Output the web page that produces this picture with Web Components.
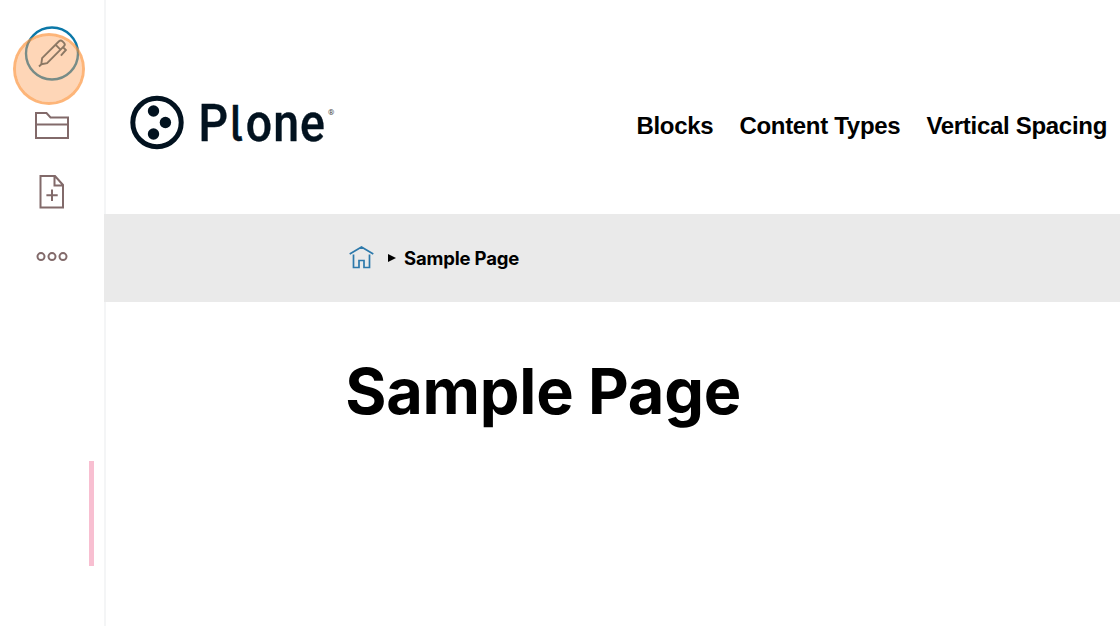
<!DOCTYPE html>
<html lang="en">
<head>
<meta charset="utf-8">
<title>Sample Page</title>
<style>
html, body { margin: 0; height: 100%; overflow: hidden; background: #fff; }
</style>
</head>
<body>
<plone-app></plone-app>
<script>
const define = (name, html) => customElements.define(name, class extends HTMLElement {
  constructor() {
    super();
    this.attachShadow({ mode: 'open' }).innerHTML = html;
  }
});

define('plone-toolbar', `
<style>
:host { display: flex; flex-direction: column; align-items: center; position: relative; box-sizing: border-box; width: 106px; padding: 26px 1px 0; border-right: 2px solid #f4f5f6; }
svg { display: block; fill: none; stroke: #826a6a; stroke-width: 2; }
.edit { width: 56px; height: 56px; }
.folder { width: 34px; height: 28px; margin-top: 29px; }
.add { width: 26px; height: 34px; margin-top: 36px; }
.more { width: 32px; height: 12px; margin-top: 42px; }
.handle { position: absolute; left: 88.500px; top: 461px; width: 5.500px; height: 105px; background: #f8bfd1; }
.click { position: absolute; left: 13px; top: 33px; box-sizing: border-box; width: 72px; height: 72px; border: 3px solid rgba(252,146,58,.68); border-radius: 50%; background: rgba(252,164,96,.45); background-clip: padding-box; }
</style>
<svg class="edit" viewBox="0 0 56 56"><circle cx="28" cy="27.500" r="26" stroke="#0b78a8" stroke-width="2.400"/><path stroke="#2f5468" stroke-width="1.900" d="M15 40.500l2.700-2.500M17.300 38.200l.8-6L35 15.300q1.800-1.700 3.500 0l1.500 1.500q1.700 1.700 0 3.400L23.100 37.200l-5.800 1M31.500 18.700l5.200 5.200M39.300 21.500l2.600 2.500-5 5.700"/></svg>
<svg class="folder" viewBox="0 0 34 28"><path d="M1 27V2h10.500l4 4.500H33V27zM1 13.500h32"/></svg>
<svg class="add" viewBox="0 0 26 34"><path d="M1.500 1h14.500l8 9v22.500H1.500zM15.500 1v9.500h8.500M13 14.500v11.500M7.400 20.200h11.300"/></svg>
<svg class="more" viewBox="0 0 32 12"><circle cx="5" cy="5.600" r="3.500"/><circle cx="16" cy="5.600" r="3.500"/><circle cx="27" cy="5.600" r="3.500"/></svg>
<div class="handle"></div>
<div class="click"></div>`);

define('plone-logo', `
<style>
:host { display: block; width: 210px; height: 60px; }
svg { display: block; fill: #02121f; }
text { font: 500 51.500px Roboto, sans-serif; }
.word { stroke: #02121f; stroke-width: .4; }
.l { font: 500 50px Inter, sans-serif; font-feature-settings: "cv05"; }
.r { font: 8px Roboto, sans-serif; fill: #444; }
</style>
<svg width="210" height="60" viewBox="0 0 210 60">
<circle cx="27" cy="29.500" r="24.200" fill="none" stroke="#02121f" stroke-width="5"/>
<circle cx="23.500" cy="18" r="5.700"/><circle cx="35.400" cy="29.500" r="5.700"/><circle cx="23.500" cy="41" r="5.700"/>
<text class="word" y="48" transform="scale(.9 1)"><tspan x="76">P</tspan><tspan class="l" x="110.800">l</tspan><tspan x="128.500 159.200 189">one</tspan></text>
<text class="r" x="198" y="22">®</text>
</svg>`);

define('nav-item', `
<style>
:host { display: block; font: bold 24px/30px "Liberation Sans", sans-serif; letter-spacing: -.3px; color: #000; white-space: nowrap; }
</style><slot></slot>`);

define('site-header', `
<style>
:host { display: flex; justify-content: space-between; box-sizing: border-box; height: 213.500px; padding: 93px 13px 0 24px; }
nav { display: flex; gap: 26px; padding-top: 18px; }
</style>
<plone-logo></plone-logo>
<nav><nav-item>Blocks</nav-item><nav-item>Content Types</nav-item><nav-item>Vertical Spacing</nav-item></nav>`);

define('bread-crumbs', `
<style>
:host { display: flex; align-items: center; box-sizing: border-box; height: 88.500px; margin-left: -2px; padding-left: 245px; background: #eaeaea; font: 700 18.500px Inter, sans-serif; font-optical-sizing: none; letter-spacing: -.17px; color: #000; position: relative; }
.home { width: 25px; height: 24px; fill: none; stroke: #2d79ab; stroke-width: 1.700; margin-top: -2px; }
.arrow { width: 8px; height: 10px; margin: 0 8px 0 14px; }
</style>
<svg class="home" viewBox="0 0 25 24"><path d="M.7 9L12.500 2l11.800 7M4.500 9.500V22.500h5.500v-7h5v7h5.500V9.500"/></svg>
<svg class="arrow" viewBox="0 0 8 10"><path d="M0 1l8 4-8 4z"/></svg>
<slot></slot>`);

define('page-title', `
<style>
:host { display: block; padding: 50px 0 0 239.300px; }
h1 { margin: 0; font: 700 63px/78px Inter, sans-serif; font-optical-sizing: none; letter-spacing: -.25px; color: #000; white-space: nowrap; }
</style><h1><slot></slot></h1>`);

define('plone-app', `
<style>
:host { display: flex; width: 1120px; height: 626px; background: #fff; }
main { flex: 1; min-width: 0; }
</style>
<plone-toolbar></plone-toolbar>
<main>
<site-header></site-header>
<bread-crumbs>Sample Page</bread-crumbs>
<page-title>Sample Page</page-title>
</main>`);
</script>
</body>
</html>
